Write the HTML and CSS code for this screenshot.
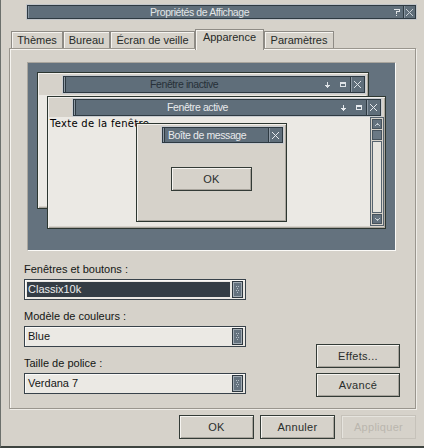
FILE: index.html
```html
<!DOCTYPE html>
<html lang="fr">
<head>
<meta charset="utf-8">
<title>Propriétés de Affichage</title>
<link rel="stylesheet" href="styles.css">
</head>
<body>
<div class="dialog">
  <div class="titlebar">
    <span class="title">Propriétés de Affichage</span>
    <span class="tb-help">
      <svg width="6" height="7" viewBox="0 0 6 7" shape-rendering="crispEdges"><path d="M0 0h6v1H0zM5 1h1v2H5zM2 2h3v1H2zM2 3h1v2H2zM2 6h1v1H2z" fill="#dfe3e6"/></svg>
    </span>
    <span class="tb-close">
      <svg width="7" height="7" viewBox="0 0 7 7" shape-rendering="crispEdges"><path d="M0 0h1v1H0zM6 0h1v1H6zM1 1h1v1H1zM5 1h1v1H5zM2 2h1v1H2zM4 2h1v1H4zM3 3h1v1H3zM2 4h1v1H2zM4 4h1v1H4zM1 5h1v1H1zM5 5h1v1H5zM0 6h1v1H0zM6 6h1v1H6z" fill="#c9cfd4"/></svg>
    </span>
  </div>

  <div class="tabs">
    <div class="tab w-themes">Thèmes</div>
    <div class="tab w-bureau">Bureau</div>
    <div class="tab w-ecran">Écran de veille</div>
    <div class="tab tab-active w-app">Apparence</div>
    <div class="tab w-param">Paramètres</div>
  </div>

  <div class="panel">
    <div class="preview">
      <div class="win win-inactive">
        <div class="win-client-plain"></div>
        <div class="wtitle wt-inactive">
          <span class="wt-text">Fenêtre inactive</span>
          <span class="wt-ico"><svg width="5" height="6" viewBox="0 0 5 6" shape-rendering="crispEdges"><path d="M2 0h1v6H2zM0 3h5v1H0zM1 4h3v1H1z" fill="#dde2e6"/></svg></span>
          <span class="wt-ico"><svg width="6" height="5" viewBox="0 0 6 5" shape-rendering="crispEdges"><path d="M0 0h6v2H0zM0 2h1v3H0zM5 2h1v3H5zM0 4h6v1H0z" fill="#dde2e6"/></svg></span>
          <span class="wt-close"><svg width="7" height="7" viewBox="0 0 7 7" shape-rendering="crispEdges"><path d="M0 0h1v1H0zM6 0h1v1H6zM1 1h1v1H1zM5 1h1v1H5zM2 2h1v1H2zM4 2h1v1H4zM3 3h1v1H3zM2 4h1v1H2zM4 4h1v1H4zM1 5h1v1H1zM5 5h1v1H5zM0 6h1v1H0zM6 6h1v1H6z" fill="#dde2e6"/></svg></span>
        </div>
      </div>

      <div class="win win-active">
        <div class="wtitle wt-active">
          <span class="wt-text">Fenêtre active</span>
          <span class="wt-ico"><svg width="5" height="6" viewBox="0 0 5 6" shape-rendering="crispEdges"><path d="M2 0h1v6H2zM0 3h5v1H0zM1 4h3v1H1z" fill="#e6eaee"/></svg></span>
          <span class="wt-ico"><svg width="6" height="5" viewBox="0 0 6 5" shape-rendering="crispEdges"><path d="M0 0h6v2H0zM0 2h1v3H0zM5 2h1v3H5zM0 4h6v1H0z" fill="#e6eaee"/></svg></span>
          <span class="wt-close"><svg width="7" height="7" viewBox="0 0 7 7" shape-rendering="crispEdges"><path d="M0 0h1v1H0zM6 0h1v1H6zM1 1h1v1H1zM5 1h1v1H5zM2 2h1v1H2zM4 2h1v1H4zM3 3h1v1H3zM2 4h1v1H2zM4 4h1v1H4zM1 5h1v1H1zM5 5h1v1H5zM0 6h1v1H0zM6 6h1v1H6z" fill="#e6eaee"/></svg></span>
        </div>
        <div class="win-client">
          <div class="client-text">Texte de la fenêtre</div>
          <div class="scroll">
            <div class="sb-btn"><svg width="5" height="3" viewBox="0 0 5 3" shape-rendering="crispEdges"><path d="M2 0h1v1H2zM1 1h3v1H1zM0 2h1v1H0zM4 2h1v1H4z" fill="#c4ccd2"/></svg></div>
            <div class="sb-thumb"></div>
            <div class="sb-track"></div>
            <div class="sb-btn"><svg width="5" height="3" viewBox="0 0 5 3" shape-rendering="crispEdges"><path d="M0 0h1v1H0zM4 0h1v1H4zM1 1h3v1H1zM2 2h1v1H2z" fill="#c4ccd2"/></svg></div>
          </div>
        </div>
      </div>

      <div class="win win-msg">
        <div class="wtitle wt-msg">
          <span class="wt-text">Boîte de message</span>
          <span class="wt-close"><svg width="7" height="7" viewBox="0 0 7 7" shape-rendering="crispEdges"><path d="M0 0h1v1H0zM6 0h1v1H6zM1 1h1v1H1zM5 1h1v1H5zM2 2h1v1H2zM4 2h1v1H4zM3 3h1v1H3zM2 4h1v1H2zM4 4h1v1H4zM1 5h1v1H1zM5 5h1v1H5zM0 6h1v1H0zM6 6h1v1H6z" fill="#e6eaee"/></svg></span>
        </div>
        <div class="btn msg-ok">OK</div>
      </div>
    </div>

    <div class="settings">
      <div class="fields">
        <div class="label">Fenêtres et boutons :</div>
        <div class="combo combo-dark">
          <span class="value">Classix10k</span>
          <span class="arrow"><svg width="3" height="7" viewBox="0 0 3 7" shape-rendering="crispEdges"><path d="M0 0h1v1H0zM2 0h1v1H2zM1 2h1v1H1zM0 4h1v1H0zM2 4h1v1H2zM1 6h1v1H1z" fill="#b4bec6"/></svg></span>
        </div>
        <div class="label">Modèle de couleurs :</div>
        <div class="combo">
          <span class="value">Blue</span>
          <span class="arrow"><svg width="3" height="7" viewBox="0 0 3 7" shape-rendering="crispEdges"><path d="M0 0h1v1H0zM2 0h1v1H2zM1 2h1v1H1zM0 4h1v1H0zM2 4h1v1H2zM1 6h1v1H1z" fill="#b4bec6"/></svg></span>
        </div>
        <div class="label">Taille de police :</div>
        <div class="combo">
          <span class="value">Verdana 7</span>
          <span class="arrow"><svg width="3" height="7" viewBox="0 0 3 7" shape-rendering="crispEdges"><path d="M0 0h1v1H0zM2 0h1v1H2zM1 2h1v1H1zM0 4h1v1H0zM2 4h1v1H2zM1 6h1v1H1z" fill="#b4bec6"/></svg></span>
        </div>
      </div>
      <div class="side-buttons">
        <div class="btn">Effets...</div>
        <div class="btn">Avancé</div>
      </div>
    </div>
  </div>

  <div class="footer">
    <div class="btn fbtn">OK</div>
    <div class="btn fbtn">Annuler</div>
    <div class="btn fbtn btn-disabled">Appliquer</div>
  </div>
</div>
</body>
</html>
```

FILE: styles.css
```css
* { box-sizing: border-box; }
html, body { margin: 0; padding: 0; }
body {
  width: 424px;
  height: 448px;
  overflow: hidden;
  background: #d6d2ca;
  font-family: "Liberation Sans", Arial, sans-serif;
  font-size: 11px;
  color: #1e2220;
}
.dialog {
  width: 424px;
  height: 448px;
  background: #d6d2ca;
  border-left: 1px solid #6c706c;
  border-bottom: 2px solid #3e4440;
  padding-top: 4px;
}

/* main title bar */
.titlebar {
  margin-left: 25px;
  width: 391px;
  height: 16px;
  display: flex;
  align-items: stretch;
  background: #5f6e7a;
  border: 1px solid #c2c6ca;
  box-shadow: inset 0 0 0 1px #2e3a42, inset 2px 0 0 #8896a2;
  color: #e2e6e8;
}
.title {
  flex: 1;
  padding-left: 123px;
  font-size: 10.5px;
  letter-spacing: -0.4px;
  line-height: 14px;
}
.tb-help {
  width: 15px;
  display: flex;
  align-items: center;
  justify-content: center;
  padding-left: 3px;
}
.tb-close {
  width: 12px;
  display: flex;
  align-items: center;
  justify-content: center;
  border-left: 1px solid #2e3a42;
  box-shadow: inset 1px 0 0 #8896a2;
  margin: 1px 1px 1px 0;
}

/* tabs */
.tabs {
  display: flex;
  align-items: flex-end;
  margin-left: 10px;
  margin-top: 9px;
  height: 20px;
  position: relative;
  z-index: 2;
}
.tab {
  height: 17px;
  margin-bottom: 1px;
  border: 1px solid #8e8b85;
  border-bottom: none;
  box-shadow: inset 1px 1px 0 #f6f4f0;
  background: #d6d2ca;
  text-align: center;
  line-height: 13px;
  padding-top: 2px;
  color: #262a28;
}
.tab-active {
  height: 21px;
  margin-bottom: -1px;
  padding-top: 1px;
}
.w-themes { width: 52px; }
.w-bureau { width: 47px; }
.w-ecran { width: 85px; }
.w-app { width: 69px; }
.w-param { width: 70px; }

/* panel */
.panel {
  position: relative;
  z-index: 1;
  margin-left: 8px;
  margin-top: -1px;
  width: 407px;
  height: 361px;
  border: 1px solid #9a968e;
  box-shadow: inset 1px 1px 0 #f6f4f0, 1px 1px 0 #efede8;
  padding: 13px 0 0 14px;
}

/* preview */
.preview {
  position: relative;
  margin-left: 3px;
  width: 369px;
  height: 189px;
  border: 1px solid;
  border-color: #aaa69e #fbfaf7 #fbfaf7 #aaa69e;
  background: #64727e;
}
.win {
  position: absolute;
  background: #d6d2ca;
  border: 1px solid #2c3630;
  box-shadow: inset 1px 1px 0 #f2f0ec, inset -1px -1px 0 #aaa69e;
}
.win-inactive { left: 9px; top: 9px; width: 332px; height: 137px; }
.win-active { left: 19px; top: 33px; width: 339px; height: 133px; }
.win-msg { left: 108px; top: 60px; width: 151px; height: 99px; }

.win-client-plain {
  position: absolute;
  left: 1px; top: 22px; right: 2px; bottom: 2px;
  background: #ebe9e4;
}

.wtitle {
  position: absolute;
  display: flex;
  align-items: stretch;
  background: #5f6e7a;
  border: 1px solid #2e3a42;
  box-shadow: 0 0 0 1px #c8ccd0, inset 1px 0 0 #8f9ba6, inset 2px 0 0 #2e3a42;
  font-size: 10.5px;
  letter-spacing: -0.4px;
  line-height: 15px;
}
.wt-inactive { left: 25px; top: 3px; width: 302px; height: 17px; color: #263038; }
.wt-active { left: 25px; top: 2px; width: 308px; height: 17px; color: #e8eaec; }
.wt-msg { left: 25px; top: 3px; width: 121px; height: 16px; color: #e8eaec; line-height: 14px; }
.wt-text { flex: 1; white-space: nowrap; overflow: hidden; }
.wt-inactive .wt-text { padding-left: 86px; }
.wt-active .wt-text { padding-left: 93px; }
.wt-msg .wt-text { padding-left: 5px; }
.wt-ico {
  width: 15px;
  display: flex;
  align-items: center;
  justify-content: center;
}
.wt-close {
  width: 14px;
  display: flex;
  align-items: center;
  justify-content: center;
  border-left: 1px solid #2e3a42;
  box-shadow: inset 1px 0 0 #8f9ba6;
}

.win-client {
  position: absolute;
  left: 1px; top: 20px; right: 1px; bottom: 2px;
  background: #ebe9e4;
  display: flex;
}
.client-text {
  flex: 1;
  padding: 1px 0 0 1px;
  font-family: "DejaVu Sans", Verdana, sans-serif;
  font-size: 10px;
  letter-spacing: 0.3px;
  line-height: 12px;
  color: #000;
  white-space: nowrap;
}
.scroll {
  width: 14px;
  border: 1px solid #56636e;
  background: #d6d2ca;
  padding: 1px;
  display: flex;
  flex-direction: column;
  gap: 1px;
}
.sb-btn {
  height: 10px;
  background: #64727e;
  border: 1px solid #46525c;
  display: flex;
  align-items: center;
  justify-content: center;
}
.sb-thumb {
  height: 10px;
  background: #6a7884;
  border: 1px solid #46525c;
}
.sb-track {
  flex: 1;
  background: #e6e4de;
  border: 1px solid #56636e;
}

.msg-ok {
  position: absolute;
  left: 34px;
  top: 43px;
  width: 81px;
  height: 31px;
  letter-spacing: 0.6px;
}

/* settings */
.settings {
  display: grid;
  grid-template-columns: 222px 84px;
  column-gap: 70px;
  margin-top: 12px;
}
.label {
  line-height: 13px;
  margin-bottom: 3px;
  color: #141614;
}
.combo {
  height: 21px;
  margin-bottom: 10px;
  border: 1px solid #38424a;
  background: #ebe9e4;
  box-shadow: inset 1px 1px 0 #fbfaf8;
  display: flex;
  align-items: center;
  padding: 0 2px 0 2px;
}
.combo:last-child { margin-bottom: 0; }
.value {
  flex: 1;
  height: 15px;
  line-height: 15px;
  padding-left: 1px;
  color: #141614;
}
.combo-dark .value {
  background: #343d45;
  color: #eceeee;
  margin-right: 2px;
}
.arrow {
  width: 11px;
  height: 17px;
  background: #64727e;
  border: 1px solid #2e3840;
  box-shadow: inset 0 0 0 1px #a2acb4;
  display: flex;
  align-items: center;
  justify-content: center;
}
.side-buttons {
  align-self: end;
  margin-bottom: -3px;
  display: flex;
  flex-direction: column;
  gap: 5px;
}

/* buttons */
.btn {
  height: 24px;
  border: 1px solid #333b36;
  background: #d6d2ca;
  box-shadow: inset 1px 1px 0 #f6f4f0, inset -1px -1px 0 #a8a49c;
  display: flex;
  align-items: center;
  justify-content: center;
  color: #2a2e2c;
  letter-spacing: 0.3px;
}
.footer {
  margin-left: 8px;
  margin-top: 6px;
  width: 407px;
  display: flex;
  justify-content: flex-end;
  gap: 6px;
}
.fbtn { width: 75px; }
.btn-disabled {
  border-color: #c6c2ba;
  box-shadow: inset 1px 1px 0 #e6e4de;
  color: #bab6ae;
}
```
